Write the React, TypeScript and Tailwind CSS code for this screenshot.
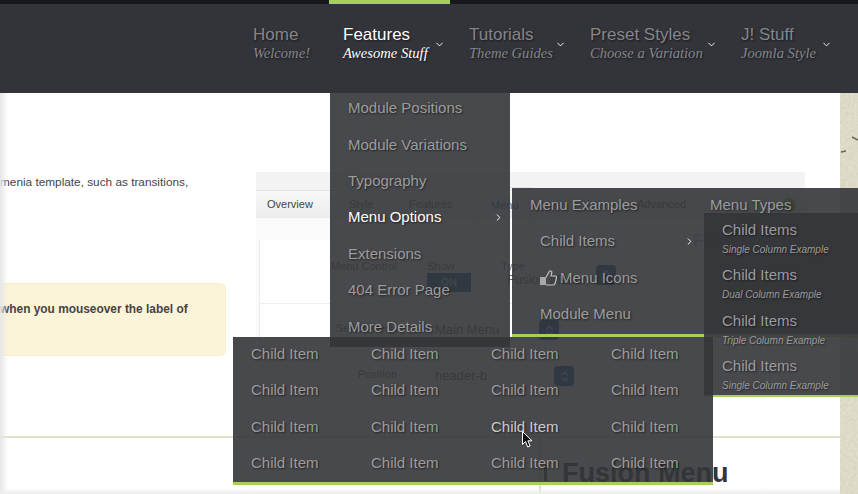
import { ChevronDown, ChevronRight, ChevronsUpDown } from "lucide-react";

const navItems = [
  { title: "Home", sub: "Welcome!", width: "w-[90px]" },
  { title: "Features", sub: "Awesome Stuff", width: "w-[121px]", active: true, arrow: "right-[5px]" },
  { title: "Tutorials", sub: "Theme Guides", width: "w-[121px]", arrow: "right-[10px]" },
  { title: "Preset Styles", sub: "Choose a Variation", width: "w-[151px]", arrow: "right-[10px]" },
  { title: "J! Stuff", sub: "Joomla Style", width: "w-[115px]", arrow: "right-[10px]" },
];

const level1 = ["Module Positions", "Module Variations", "Typography", "Menu Options", "Extensions", "404 Error Page", "More Details"];

const childTypes = ["Single Column Example", "Dual Column Example", "Triple Column Example", "Single Column Example"];

const shadow = "[text-shadow:1px_1px_2px_rgba(0,0,0,0.55)]";

function Header() {
  return (
    <header className="h-[93px] bg-[#33343a] border-t-4 border-[#17181c]">
      <nav className="flex pl-[239px]">
        {navItems.map((item, i) => (
          <a
            key={item.title}
            className={`${item.width} ${i === 2 ? "ml-[5px]" : ""} relative h-[89px] pl-[14px] pt-[21px] ${item.active ? "text-white" : "text-[#85868a]"} ${shadow}`}
          >
            {item.active && <span className="absolute left-0 right-0 -top-1 h-1 bg-[#a6d05b]" />}
            <span className="block text-[17px] leading-5">{item.title}</span>
            <span className="block -mt-[1px] whitespace-nowrap font-['Liberation_Serif'] italic text-[14.6px] leading-[18px]">{item.sub}</span>
            {item.arrow && <ChevronDown size={11} strokeWidth={2} className={`absolute top-[35px] text-white ${item.arrow}`} />}
          </a>
        ))}
      </nav>
    </header>
  );
}

function Spin() {
  return (
    <span className="flex items-center justify-center w-5 h-5 bg-[#0b5e8c] text-white rounded-sm">
      <ChevronsUpDown size={13} />
    </span>
  );
}

// the admin screenshot embedded in the article
function ArticleShot() {
  return (
    <div className="ml-[30px] mt-[79px] w-[549px] h-[225px] bg-[#fafafa] text-[11px] text-[#666] border-b border-[#eee]">
      <div className="h-[18px] bg-[#f3f3f3]" />
      <div className="flex items-center h-[28px] bg-gradient-to-b from-[#f8f8f8] to-[#ececec] border-t border-[#e4e4e4] pl-[11px]">
        <span className="w-[82px] text-[#444]">Overview</span>
        <span className="w-[60px]">Style</span>
        <span className="w-[68px]">Features</span>
        <span className="flex items-center w-[58px] h-[36px] pl-[13px] border border-b-0 border-[#e4e4e4] rounded-t text-[#1c6fa5]">Menu</span>
        <span className="ml-[102px]">Advanced</span>
        <span className="ml-[96px] w-[14px] h-[14px] rounded-full bg-[#8cc01a]" />
      </div>
      <div className="flex justify-end h-[22px] pr-[1px] text-[18px] leading-[46px] font-bold text-[#c4c4c4] whitespace-nowrap">Fusion Menu</div>
      <div className="ml-[3px] bg-white border-l border-[#eee]">
        <div className="flex h-[64px] pt-[18px] border-b border-[#eee]">
          <span className="w-[137px] text-right">Menu Control</span>
          <div className="ml-[30px] w-[74px]">
            <div>Show</div>
            <div className="-mt-[2px] w-[44px] h-[19px] bg-[#0b5e8c] text-center text-[#9cc] font-bold leading-[19px]">ON</div>
          </div>
          <div className="w-[95px]">
            <div>Type</div>
            <div className="-mt-[3px] ml-[6px] text-[13px] leading-4 whitespace-nowrap">Fusion Menu</div>
          </div>
          <div className="mt-[7px]">
            <Spin />
          </div>
        </div>
        <div className="flex h-[46px] pt-[16px] border-b border-[#f3f3f3]">
          <span className="w-[137px] text-right">Select Menu</span>
          <span className="ml-[38px] w-[104px] text-[13px]">Main Menu</span>
          <Spin />
        </div>
        <div className="flex h-[46px] pt-[16px]">
          <span className="w-[137px] text-right">Position</span>
          <span className="ml-[38px] w-[119px] text-[13px]">header-b</span>
          <Spin />
        </div>
      </div>
    </div>
  );
}

function PageBody() {
  return (
    <div className="flex h-[401px]">
      <div className="w-[840px] relative bg-white text-[#444] font-['Liberation_Sans',sans-serif]">
        <div className="flex h-[343px]">
          <div className="w-[226px] shrink-0">
            <p className="mt-[80px] w-[187px] text-[11.8px] leading-[18px] text-right whitespace-nowrap">menia template, such as transitions,</p>
            <div className="mt-[92px] h-[73px] bg-[#fcf4d9] rounded-r-md border border-l-0 border-[#f8eecb] pt-[16px] text-[11.9px] leading-[18px] font-bold whitespace-nowrap">
              when you mouseover the label of
            </div>
          </div>
          <ArticleShot />
        </div>
        <div className="h-[2px] bg-[#e4e0ce]" />
        <div className="flex h-[56px]">
          <div className="w-[541px] border-r-2 border-[#e4e0ce]" />
          <div className="flex items-start pt-[20px] pl-[3px]">
            <span className="w-[3px] h-[16px] mt-[7px] bg-[#4e4a3a]" />
            <h2 className="ml-[15px] font-bold text-[27px] leading-[30px] text-[#33343a] whitespace-nowrap">Fusion Menu</h2>
          </div>
        </div>
        {/* page edge shadows */}
        <div className="absolute inset-y-0 left-0 w-2 bg-gradient-to-r from-[#e6e6e6] to-transparent" />
        <div className="absolute inset-x-0 bottom-0 h-[6px] bg-gradient-to-b from-transparent to-[#ececec]" />
      </div>
      <aside className="w-[18px] bg-[#e2decd] relative overflow-hidden">
        <svg width="18" height="401" className="absolute inset-0">
          <filter id="paper">
            <feTurbulence type="fractalNoise" baseFrequency="0.35" numOctaves="3" />
            <feColorMatrix values="0 0 0 0 0.5  0 0 0 0 0.47  0 0 0 0 0.35  0 0 0 0.5 -0.15" />
          </filter>
          <rect width="18" height="401" filter="url(#paper)" />
          <path d="M12 44l6 3M1 59l5-1" stroke="#6b6658" strokeWidth="1.5" />
        </svg>
      </aside>
    </div>
  );
}

function ThumbIcon() {
  return (
    <svg width="17" height="16" viewBox="0 0 17 16" className="shrink-0">
      <rect x="0" y="7" width="6" height="8" fill="#a9a9ab" />
      <path
        d="M6 7.5 9.5 1h1.2c.9 0 1.3.8 1.1 1.7L11 6h4.4c.9 0 1.5.8 1.2 1.7l-1.6 6c-.2.8-.8 1.3-1.6 1.3H6"
        fill="none"
        stroke="#c4c4c6"
        strokeWidth="1.2"
      />
    </svg>
  );
}

function MenuOverlays() {
  return (
    <div className={`text-[15px] leading-5 text-[#9c9c9e] font-['Liberation_Sans',sans-serif] ${shadow}`}>
      {/* first level */}
      <div className="absolute left-[330px] top-[93px] w-[180px] h-[254px] bg-[#343539]/90 pl-[18px]">
        <div className="-mt-[3px]">
          {level1.map((label) => (
            <div key={label} className={`flex items-center h-[36.4px] ${label === "Menu Options" ? "text-white" : ""}`}>
              {label}
              {label === "Menu Options" && <ChevronRight size={11} strokeWidth={2} className="ml-[52px] text-white" />}
            </div>
          ))}
        </div>
      </div>

      {/* second level */}
      <div className="absolute left-[512px] top-[188px] w-[346px] h-[149px] bg-[#343539]/90 border-b-[3px] border-[#a6d05b]">
        <div className="flex pl-[18px] pt-[7px]">
          <span className="w-[180px]">Menu Examples</span>
          <span>Menu Types</span>
        </div>
        <div className="pl-[28px] w-[192px]">
          <div className="flex items-center justify-between h-[36px] mt-[8px] pr-[9px]">
            Child Items
            <ChevronRight size={11} strokeWidth={2} className="text-white" />
          </div>
          <div className="flex items-center gap-[3px] h-[37px]">
            <ThumbIcon />
            Menu Icons
          </div>
          <div className="flex items-center h-[36px]">Module Menu</div>
        </div>
      </div>

      {/* third level */}
      <div className="absolute left-[704px] top-[213px] w-[154px] h-[184px] bg-[#343539]/90 border-b-2 border-[#a6d05b] pl-[18px] pt-[7px]">
        {childTypes.map((sub, i) => (
          <div key={i} className="h-[45.4px]">
            <div>Child Items</div>
            <div className="text-[10px] italic leading-[14px] mt-[3px] whitespace-nowrap">{sub}</div>
          </div>
        ))}
      </div>

      {/* four column panel */}
      <div className="absolute left-[233px] top-[337px] w-[480px] h-[148px] bg-[#343539]/90 border-b-[3px] border-[#a6d05b] pl-[18px] pt-[7px] grid grid-cols-[repeat(4,120px)] auto-rows-[36.4px]">
        {Array.from({ length: 16 }).map((_, i) => (
          <div key={i} className={i === 10 ? "text-[#cbcbcd]" : ""}>
            Child Item
          </div>
        ))}
      </div>

      {/* mouse pointer */}
      <svg width="12" height="17" viewBox="0 0 12 17" className="absolute left-[522px] top-[431px]">
        <path d="M.5.5v13l3-3 2.2 5.5 2.4-1-2.2-5.2H10Z" fill="#111" stroke="#fff" strokeWidth="1" />
      </svg>
    </div>
  );
}

export default function App() {
  return (
    <div className="relative w-[858px] h-[494px] overflow-hidden bg-white font-['Liberation_Sans',sans-serif]">
      <Header />
      <PageBody />
      <MenuOverlays />
    </div>
  );
}
